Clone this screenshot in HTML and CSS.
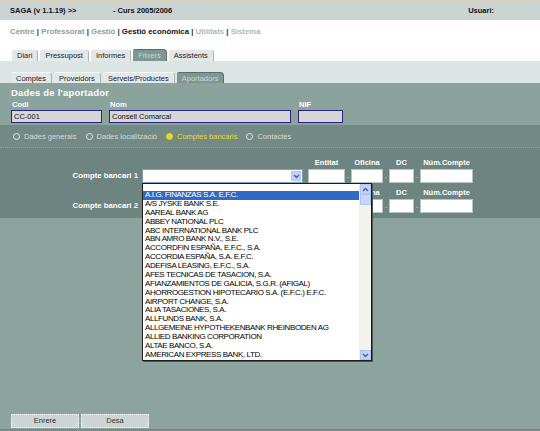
FILE: index.html
```html
<!DOCTYPE html>
<html lang="ca">
<head>
  <meta charset="UTF-8">
  <title>SAGA - Aportadors</title>
  <link rel="stylesheet" href="styles.css">
</head>
<body>
  <div class="page">
    <div class="topline"></div>

    <div class="header">
      <span class="app">SAGA (v 1.1.19) &gt;&gt;</span>
      <span class="curs">- Curs 2005/2006</span>
      <span class="user">Usuari:</span>
    </div>

    <div class="nav">
      <div class="menu">
        <span class="m-link">Centre</span> | <span class="m-link">Professorat</span> | <span class="m-link">Gestió</span> | <span class="m-current">Gestió econòmica</span> | <span class="m-light">Utilitats</span> | <span class="m-light">Sistema</span>
      </div>
      <div class="tabs">
        <span class="tab">Diari</span>
        <span class="tab">Pressupost</span>
        <span class="tab">Informes</span>
        <span class="tab active">Fitxers</span>
        <span class="tab">Assistents</span>
      </div>
    </div>

    <div class="subnav">
      <div class="tabs">
        <span class="tab">Comptes</span>
        <span class="tab">Proveidors</span>
        <span class="tab">Serveis/Productes</span>
        <span class="tab active">Aportadors</span>
      </div>
    </div>

    <div class="aportador">
      <h2 class="title">Dades de l'aportador</h2>
      <div class="fields">
        <div class="field codi">
          <label>Codi</label>
          <div class="ro-input">CC-001</div>
        </div>
        <div class="field nom">
          <label>Nom</label>
          <div class="ro-input">Consell Comarcal</div>
        </div>
        <div class="field nif">
          <label>NIF</label>
          <div class="ro-input"></div>
        </div>
      </div>
    </div>

    <div class="radios">
      <span class="radio"><i></i>Dades generals</span>
      <span class="radio"><i></i>Dades localització</span>
      <span class="radio checked"><i></i>Comptes bancaris</span>
      <span class="radio"><i></i>Contactes</span>
    </div>

    <div class="bank">
      <div class="bank-row">
        <span class="bank-label">Compte bancari 1</span>
        <div class="select-wrap">
          <div class="select">
            <span class="select-btn">
              <svg width="7" height="5" viewBox="0 0 7 5"><polyline points="1,1 3.5,3.5 6,1" fill="none" stroke="#4d6185" stroke-width="1.4"/></svg>
            </span>
          </div>
          <div class="dropdown">
            <div class="opts">
              <div class="opt empty"></div>
              <div class="opt sel">A.I.G. FINANZAS S.A. E.F.C.</div>
              <div class="opt">A/S JYSKE BANK S.E.</div>
              <div class="opt">AAREAL BANK AG</div>
              <div class="opt">ABBEY NATIONAL PLC</div>
              <div class="opt">ABC INTERNATIONAL BANK PLC</div>
              <div class="opt">ABN AMRO BANK N.V., S.E.</div>
              <div class="opt">ACCORDFIN ESPAÑA, E.F.C., S.A.</div>
              <div class="opt">ACCORDIA ESPAÑA, S.A. E.F.C.</div>
              <div class="opt">ADEFISA LEASING, E.F.C., S.A.</div>
              <div class="opt">AFES TECNICAS DE TASACION, S.A.</div>
              <div class="opt">AFIANZAMIENTOS DE GALICIA, S.G.R. (AFIGAL)</div>
              <div class="opt">AHORROGESTION HIPOTECARIO S.A. (E.F.C.) E.F.C.</div>
              <div class="opt">AIRPORT CHANGE, S.A.</div>
              <div class="opt">ALIA TASACIONES, S.A.</div>
              <div class="opt">ALLFUNDS BANK, S.A.</div>
              <div class="opt">ALLGEMEINE HYPOTHEKENBANK RHEINBODEN AG</div>
              <div class="opt">ALLIED BANKING CORPORATION</div>
              <div class="opt">ALTAE BANCO, S.A.</div>
              <div class="opt">AMERICAN EXPRESS BANK, LTD.</div>
            </div>
            <div class="scrollbar">
              <span class="sb-btn">
                <svg width="7" height="5" viewBox="0 0 7 5"><polyline points="1,4 3.5,1.5 6,4" fill="none" stroke="#4d6185" stroke-width="1.4"/></svg>
              </span>
              <span class="sb-thumb"></span>
              <span class="sb-track"></span>
              <span class="sb-btn">
                <svg width="7" height="5" viewBox="0 0 7 5"><polyline points="1,1 3.5,3.5 6,1" fill="none" stroke="#4d6185" stroke-width="1.4"/></svg>
              </span>
            </div>
          </div>
        </div>
        <div class="cc">
          <div class="cc-field entitat"><label>Entitat</label><span class="cc-input"></span></div>
          <span class="dash">-</span>
          <div class="cc-field oficina"><label>Oficina</label><span class="cc-input"></span></div>
          <span class="dash">-</span>
          <div class="cc-field dc"><label>DC</label><span class="cc-input"></span></div>
          <span class="dash">-</span>
          <div class="cc-field num"><label>Núm.Compte</label><span class="cc-input"></span></div>
        </div>
      </div>

      <div class="bank-row">
        <span class="bank-label">Compte bancari 2</span>
        <div class="select-wrap">
          <div class="select">
            <span class="select-btn">
              <svg width="7" height="5" viewBox="0 0 7 5"><polyline points="1,1 3.5,3.5 6,1" fill="none" stroke="#4d6185" stroke-width="1.4"/></svg>
            </span>
          </div>
        </div>
        <div class="cc">
          <div class="cc-field entitat"><label>Entitat</label><span class="cc-input"></span></div>
          <span class="dash">-</span>
          <div class="cc-field oficina"><label>Oficina</label><span class="cc-input"></span></div>
          <span class="dash">-</span>
          <div class="cc-field dc"><label>DC</label><span class="cc-input"></span></div>
          <span class="dash">-</span>
          <div class="cc-field num"><label>Núm.Compte</label><span class="cc-input"></span></div>
        </div>
      </div>
    </div>

    <div class="rest">
      <div class="buttons">
        <span class="btn">Enrere</span>
        <span class="btn">Desa</span>
      </div>
    </div>
  </div>
</body>
</html>
```

FILE: styles.css
```css
body {
  margin: 0;
  font-family: "Liberation Sans", Arial, sans-serif;
  font-size: 7.5px;
  background-color: #8ca39e;
}
.page {
  width: 540px;
  height: 431px;
  display: flex;
  flex-direction: column;
  overflow: hidden;
}
.topline {
  height: 1px;
  background-color: #d8cfb8;
}

/* capcalera */
.header {
  height: 19px;
  background-color: #cbd3d3;
  display: flex;
  align-items: center;
  padding: 0 46px 0 10px;
  font-weight: bold;
  color: #111;
}
.app {
  width: 103px;
}
.user {
  margin-left: auto;
}

/* menu principal */
.nav {
  height: 41px;
  background-color: #fff;
  display: flex;
  flex-direction: column;
}
.menu {
  padding: 7px 0 0 10px;
  line-height: 10px;
  font-weight: bold;
  font-size: 7.8px;
  color: #333;
}
.m-link {
  color: #8a9d99;
}
.m-current {
  color: #111;
}
.m-light {
  color: #a6bbbf;
}
.tabs {
  margin-top: auto;
  display: flex;
  gap: 2px;
  padding-left: 12px;
}
.tab {
  height: 12px;
  line-height: 12px;
  padding: 0 5px;
  background-color: #e3e7e7;
  color: #222;
  border-top: 1px solid #f6f8f8;
  border-right: 1px solid #a9b4b3;
  border-radius: 2px 4px 0 0;
  box-sizing: border-box;
}
.tab.active {
  background-color: #7f9792;
  color: #c9d5d2;
  border-top-color: #55706a;
  border-right-color: #55706a;
}
.subnav {
  height: 22px;
  background-color: #dde4e4;
  display: flex;
  flex-direction: column;
}
.subnav .tabs {
  padding-left: 11px;
}
.subnav .tab {
  height: 11px;
  line-height: 11px;
}

/* dades de l'aportador */
.aportador {
  height: 42px;
  padding: 3px 11px 0;
  box-sizing: border-box;
  background-color: #8ca29d;
}
.title {
  margin: 0;
  font-size: 9.5px;
  letter-spacing: 0.2px;
  line-height: 14px;
  color: #fff;
}
.fields {
  display: flex;
  gap: 7px;
}
.field label {
  display: block;
  line-height: 9px;
  font-weight: bold;
  color: #fff;
  padding-left: 1px;
}
.ro-input {
  margin-top: 1px;
  height: 13px;
  line-height: 11px;
  box-sizing: border-box;
  border: 1px solid #26267c;
  background-color: #d6d6d6;
  padding-left: 2px;
  color: #111;
}
.codi .ro-input { width: 91px; }
.nom .ro-input { width: 182px; }
.nif .ro-input { width: 45px; }

/* radios */
.radios {
  height: 22px;
  background-color: #738984;
  border-bottom: 1px dotted #8fa39e;
  display: flex;
  align-items: center;
  gap: 9px;
  padding-left: 13px;
  color: #d3dad8;
}
.radio {
  display: flex;
  align-items: center;
}
.radio i {
  width: 7px;
  height: 7px;
  box-sizing: border-box;
  border: 1px solid #e6ebe9;
  border-radius: 50%;
  margin-right: 4px;
}
.radio.checked {
  color: #e8dc1c;
}
.radio.checked i {
  background-color: #e8dc1c;
  border-color: #e8dc1c;
}

/* comptes bancaris */
.bank {
  height: 70px;
  box-sizing: border-box;
  padding-top: 9px;
  background-color: #6e8480;
}
.bank-row {
  display: flex;
  align-items: flex-end;
  margin-bottom: 4px;
}
.bank-label {
  width: 138px;
  text-align: right;
  line-height: 14px;
  font-weight: bold;
  font-size: 7.8px;
  color: #fff;
  padding-right: 4px;
}
.select-wrap {
  position: relative;
  width: 161px;
}
.select {
  height: 14px;
  box-sizing: border-box;
  border: 1px solid #7f9db9;
  background-color: #fff;
  display: flex;
  justify-content: flex-end;
  padding: 1px;
}
.select-btn {
  width: 10px;
  background-color: #c3d4fc;
  border: 1px solid #b2c4f2;
  box-sizing: border-box;
  display: flex;
  align-items: center;
  justify-content: center;
}
.cc {
  display: flex;
  align-items: flex-end;
  margin-left: 5px;
}
.cc-field {
  display: flex;
  flex-direction: column;
  align-items: center;
}
.cc-field label {
  line-height: 12px;
  font-weight: bold;
  color: #fff;
  white-space: nowrap;
}
.cc-input {
  height: 14px;
  box-sizing: border-box;
  border: 1px solid #b8c4c1;
  background-color: #fff;
  width: 100%;
}
.entitat { width: 37px; }
.oficina { width: 32px; }
.dc { width: 25px; }
.num { width: 53px; }
.dash {
  width: 6px;
  text-align: center;
  line-height: 12px;
  color: #ccc;
}

/* llista desplegable oberta */
.dropdown {
  position: absolute;
  top: 100%;
  left: 0;
  width: 230px;
  height: 178px;
  box-sizing: border-box;
  border: 1px solid #1c1c1c;
  background-color: #fff;
  box-shadow: 1px 1px 0 #4a5553;
  display: flex;
  z-index: 2;
}
.opts {
  flex: 1;
}
.opt {
  height: 8.875px;
  line-height: 8.875px;
  padding-left: 2px;
  font-size: 8px;
  letter-spacing: -0.4px;
  white-space: nowrap;
  color: #000;
}
.opt.empty {
  height: 7px;
}
.opt.sel {
  background-color: #316ac5;
  color: #fff;
}
.scrollbar {
  width: 11px;
  display: flex;
  flex-direction: column;
  background-color: #f3f3ee;
  border-left: 1px solid #eee;
}
.sb-btn {
  height: 10px;
  background-color: #c3d4fc;
  border: 1px solid #b2c4f2;
  box-sizing: border-box;
  display: flex;
  align-items: center;
  justify-content: center;
}
.sb-thumb {
  height: 11px;
  background-color: #c8d6fb;
  border: 1px solid #b2c4f2;
  box-sizing: border-box;
}
.sb-track {
  flex: 1;
}

/* botons */
.rest {
  flex: 1;
  display: flex;
  flex-direction: column;
  justify-content: flex-end;
  border-bottom: 2px solid #7c8786;
}
.buttons {
  display: flex;
  gap: 2px;
  padding: 0 0 1px 11px;
}
.btn {
  width: 68px;
  height: 14px;
  line-height: 12px;
  box-sizing: border-box;
  text-align: center;
  background-color: #cdd5d5;
  border: 1px dotted #f2f5f5;
  color: #333;
}
```
